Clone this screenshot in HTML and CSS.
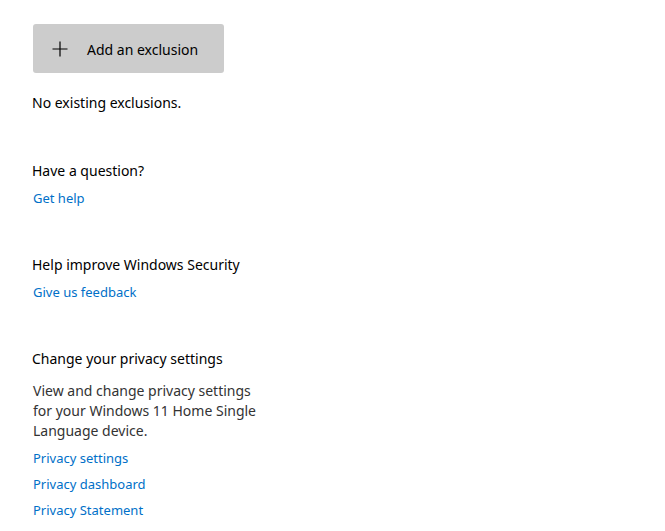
FILE: index.html
```html
<!DOCTYPE html>
<html lang="en">

<head>
    <meta charset="UTF-8">
    <title>Exclusions</title>
    <link rel="stylesheet" href="styles.css">
</head>

<body>
    <div class="page">
        <button class="add-button" type="button">
            <svg class="plus" width="16" height="16" viewBox="0 0 16 16">
                <path d="M8 0.5V15.5M0.5 8H15.5" stroke="#000" stroke-width="1.2" fill="none" />
            </svg>
            <span>Add an exclusion</span>
        </button>

        <p class="empty">No existing exclusions.</p>

        <section class="block">
            <h3>Have a question?</h3>
            <a href="#">Get help</a>
        </section>

        <section class="block">
            <h3>Help improve Windows Security</h3>
            <a href="#">Give us feedback</a>
        </section>

        <section class="block">
            <h3>Change your privacy settings</h3>
            <p class="desc">View and change privacy settings for your Windows 11 Home Single Language device.</p>
            <a href="#">Privacy settings</a>
            <a href="#">Privacy dashboard</a>
            <a href="#">Privacy Statement</a>
        </section>
    </div>
</body>

</html>
```

FILE: styles.css
```css
body {
    margin: 0;
    background-color: #fff;
    font-family: "Noto Sans", "Open Sans", sans-serif;
    font-size: 14px;
    color: #000;
}

.page {
    padding: 24px 0 0 32px;
}

.add-button {
    display: flex;
    align-items: center;
    width: 191px;
    height: 49px;
    margin-left: 1px;
    padding: 1px 0 0 19px;
    gap: 19px;
    background-color: #cccccc;
    border: none;
    border-radius: 3px;
    font-family: inherit;
    font-size: 14px;
    color: #000;
}

.empty {
    margin: 20px 0 0;
    line-height: 20px;
}

.block {
    display: flex;
    flex-direction: column;
    align-items: flex-start;
    margin-top: 47px;
}

.block:first-of-type {
    margin-top: 48px;
}

.block h3 {
    margin: 0;
    font-size: 14px;
    font-weight: normal;
    line-height: 20px;
}

.block a {
    margin-top: 7px;
    margin-left: 1px;
    color: #0070c8;
    font-size: 13px;
    text-decoration: none;
    line-height: 20px;
}

.block a + a {
    margin-top: 6px;
}

.desc {
    width: 230px;
    margin: 12px 0 0 1px;
    color: #333;
    line-height: 20px;
}
```
